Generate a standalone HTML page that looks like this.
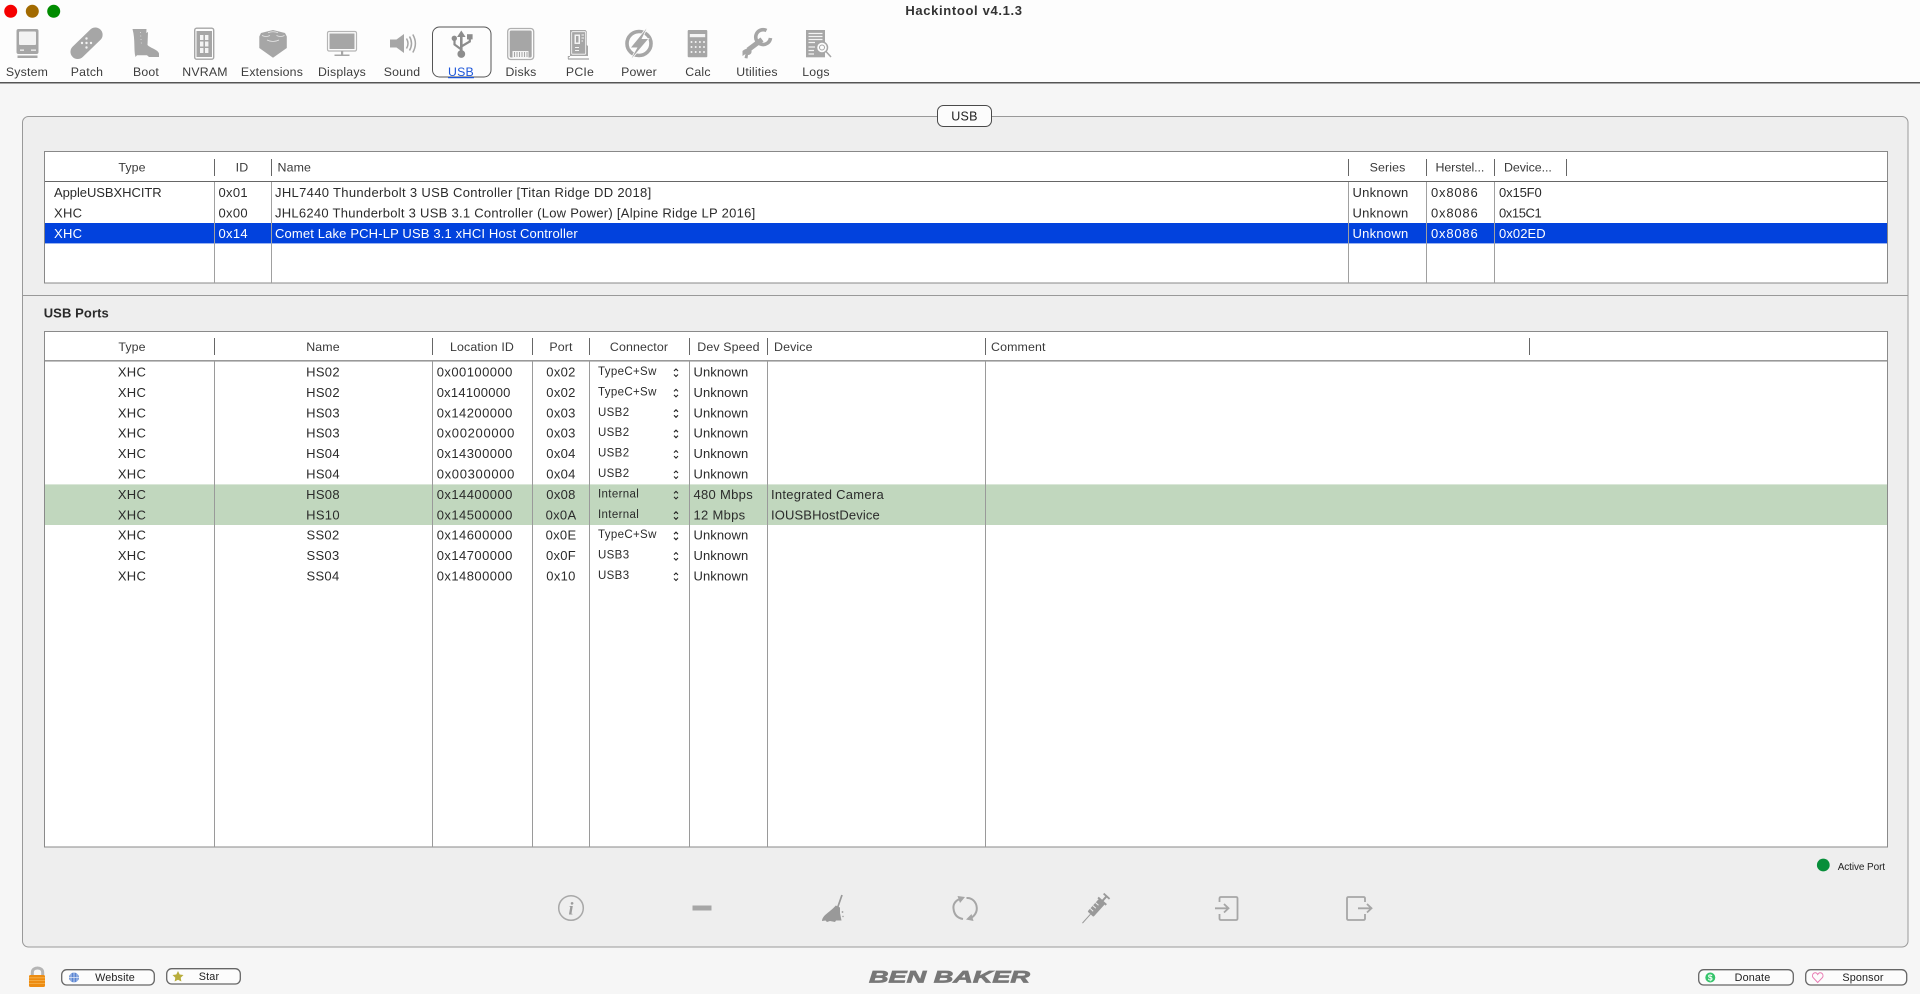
<!DOCTYPE html>
<html><head><meta charset="utf-8"><title>Hackintool</title>
<style>
html,body{margin:0;padding:0;background:#f6f6f6;width:1920px;height:994px;overflow:hidden}
svg{display:block;position:absolute;left:0;top:0;filter:blur(.3px)}
text{font-family:"Liberation Sans",sans-serif;font-size:13px;letter-spacing:.3px;fill:#2b2b2b}
.m{text-anchor:middle}
.h{font-size:12.4px;letter-spacing:.12px;fill:#3a3a3a}
.tb{font-size:12.3px;letter-spacing:.2px;text-anchor:middle;fill:#3c3c3c}
.c{font-size:11.5px;letter-spacing:.35px;fill:#2b2b2b}
.b{font-size:10.8px;letter-spacing:.15px;text-anchor:middle;fill:#222}
.w{fill:#fff}
.i{fill:#a6a6a6}
.s{fill:none;stroke:#a6a6a6}
.bi{fill:none;stroke:#a8a8a8}
</style></head>
<body>
<svg width="1920" height="994" viewBox="0 0 1920 994" xmlns="http://www.w3.org/2000/svg">
<rect x="0" y="0" width="1920" height="82" fill="#fdfdfd"/>
<rect x="0" y="82" width="1920" height="912" fill="#f6f6f6"/>
<rect x="0" y="82" width="1920" height="1.5" fill="#555"/>

<circle cx="10.7" cy="11.3" r="6.5" fill="#f50000"/>
<circle cx="32.3" cy="11.3" r="6.5" fill="#a26a00"/>
<circle cx="53.7" cy="11.3" r="6.5" fill="#008c00"/>
<text x="964" y="15" class="m" style="font-weight:bold;font-size:13px;letter-spacing:.65px;fill:#333">Hackintool v4.1.3</text>

<!-- selected toolbar box -->
<rect x="432.5" y="27" width="58.5" height="50" rx="7" fill="#fdfdfd" stroke="#555" stroke-width="1"/>

<!-- System -->
<rect x="16.5" y="29" width="22" height="25" rx="2" class="i"/>
<rect x="19" y="31.5" width="17" height="13.5" rx="1" fill="#f2f2f2"/>
<rect x="20" y="49.5" width="4" height="1.3" fill="#f2f2f2"/><rect x="31" y="49.5" width="5" height="1.3" fill="#f2f2f2"/>
<rect x="17.5" y="55.5" width="20" height="2.5" class="i"/>
<!-- Patch -->
<rect x="67" y="36" width="39" height="14.5" rx="7.2" class="i" transform="rotate(-44 86.5 43.2)"/>
<g fill="#f2f2f2"><circle cx="86.5" cy="38.5" r="1.2"/><circle cx="91" cy="43" r="1.2"/><circle cx="82" cy="43" r="1.2"/><circle cx="86.5" cy="47.5" r="1.2"/><circle cx="86.5" cy="43" r="1.2"/></g>
<!-- Boot -->
<path d="M132.5 29 H146.5 L146.3 33 L148 32 L147.5 45 C150 48 158 49.5 159 53.5 V57 H149 L147 55.3 H137 L135.5 57 C133.5 50 135.5 40 132.5 29Z" class="i"/>
<path d="M140.5 32 L141.5 46" fill="none" stroke="#e8e8e8" stroke-width=".7" stroke-dasharray="1 2.5"/>
<!-- NVRAM -->
<rect x="194.7" y="28.2" width="19" height="31" rx="2" fill="#fdfdfd" stroke="#a6a6a6" stroke-width="1.4"/>
<rect x="196.5" y="31" width="15.5" height="26" class="i"/>
<g fill="#f4f4f4"><rect x="200" y="35" width="3.4" height="5"/><rect x="205" y="35" width="3.4" height="5"/><rect x="200" y="41.5" width="3.4" height="5"/><rect x="205" y="41.5" width="3.4" height="5"/><rect x="200" y="48" width="3.4" height="5"/><rect x="205" y="48" width="3.4" height="5"/></g>
<!-- Extensions -->
<path d="M273 30 L285 33 L286.8 36.5 L286.8 48 L273 57.7 L259.3 48 L259.3 36.5 L261 33Z" class="i"/>
<g fill="none" stroke="#e8e8e8" stroke-width=".8"><path d="M262 35.5 Q266 37.5 270 35.5"/><path d="M276.5 35.5 Q280.5 37.5 284.5 35.5"/><path d="M267 40 Q273 43 279 40"/><path d="M268 32.7 Q273 30.8 278 32.7"/></g>
<!-- Displays -->
<rect x="327.5" y="31.5" width="29" height="19.5" rx="1.5" fill="#fdfdfd" stroke="#b5b5b5" stroke-width="1.2"/>
<rect x="329.5" y="33.5" width="25" height="15.5" class="i"/>
<rect x="341" y="51" width="2.2" height="4" class="i"/><rect x="334.5" y="54.5" width="15" height="1.5" class="i"/>
<!-- Sound -->
<path d="M390 39.5 H396.5 L404 34 V53 L396.5 47.5 H390Z" class="i"/>
<g class="s" stroke-width="1.5"><path d="M406.5 38.5 Q409.5 43.5 406.5 48.5"/><path d="M409.5 36.5 Q413.5 43.5 409.5 50.5"/><path d="M412.8 34.5 Q418 43.5 412.8 52.5"/></g>
<!-- USB -->
<g><path d="M461.3 35 V53" fill="none" stroke="#8d8d8d" stroke-width="2.6"/><path d="M461.3 30.5 L457 37 H465.6Z" fill="#8d8d8d"/><circle cx="461.3" cy="54" r="3.9" fill="#8d8d8d"/>
<path d="M461.3 49.5 L454.5 44.5 V39" fill="none" stroke="#8d8d8d" stroke-width="2.2"/><circle cx="454.3" cy="38.3" r="2.7" fill="#8d8d8d"/>
<path d="M461.3 46.5 L469.8 41.5 V37" fill="none" stroke="#8d8d8d" stroke-width="2.2"/><rect x="467" y="34.2" width="5.6" height="5.2" fill="#8d8d8d"/></g>
<!-- Disks -->
<rect x="507.7" y="28.5" width="26" height="31" rx="3" fill="#fdfdfd" stroke="#b0b0b0" stroke-width="1.3"/>
<rect x="509.7" y="30.5" width="22" height="27" rx="1.5" class="i"/>
<rect x="512.5" y="51" width="16" height="6.5" fill="#f4f4f4"/>
<path d="M514.5 52 V57 M517 52 V57 M519.5 52 V57 M522 52 V57 M524.5 52 V57 M527 52 V57" stroke="#a6a6a6" stroke-width="1"/>
<!-- PCIe -->
<path d="M570 30 H585.5 L586.8 31.5 V45 L588 46 V56 H570Z" class="i"/><path d="M568 59 H589" stroke="#a6a6a6" stroke-width="1.2"/><path d="M568.3 59 V56.5 H570" fill="none" stroke="#a6a6a6"/>
<rect x="571.7" y="31.7" width="14" height="22.5" rx="1" fill="none" stroke="#fdfdfd" stroke-width=".8"/>
<rect x="574.5" y="34.5" width="5.5" height="9.5" fill="#f4f4f4"/><rect x="576" y="36" width="2.5" height="6.5" class="i"/>
<path d="M581.5 35 H584 M581.5 38 H584 M581.5 41 H583" stroke="#f4f4f4" stroke-width="1"/><path d="M575 47.5 H579 M575 50.5 H579" stroke="#f4f4f4" stroke-width="1"/>
<!-- Power -->
<circle cx="639" cy="43.5" r="12" fill="none" stroke="#a6a6a6" stroke-width="3.6"/>
<path d="M646.5 28.5 L631 47.5 H637.5 L631.5 58.5 L648 39 H641.5Z" class="i" stroke="#fdfdfd" stroke-width="1.6" paint-order="stroke"/>
<!-- Calc -->
<rect x="687.7" y="30" width="19.6" height="27.3" rx="1" class="i"/>
<rect x="689.8" y="34" width="15.4" height="3.2" fill="#f4f4f4"/>
<g fill="#f4f4f4"><circle cx="691.5" cy="42" r="1"/><circle cx="695.7" cy="42" r="1"/><circle cx="699.9" cy="42" r="1"/><circle cx="704" cy="42" r="1"/><circle cx="691.5" cy="47" r="1"/><circle cx="695.7" cy="47" r="1"/><circle cx="699.9" cy="47" r="1"/><circle cx="704" cy="47" r="1"/><circle cx="691.5" cy="52" r="1"/><circle cx="695.7" cy="52" r="1"/><circle cx="699.9" cy="52" r="1"/><circle cx="704" cy="52" r="1"/></g>
<!-- Utilities -->
<path d="M762 39.5 L748 50" fill="none" stroke="#a6a6a6" stroke-width="5"/>
<path d="M766.5 30.5 A7.4 7.4 0 1 0 770.5 38" fill="none" stroke="#a6a6a6" stroke-width="3.6"/>
<path d="M742.5 51 C745 48.5 749 48 751 49.5 C752.5 52 751 55 748 55 L747.5 58.5 L744.5 58 L745.5 54 L742.5 56Z" class="i"/>
<!-- Logs -->
<rect x="806" y="30" width="19" height="27.3" class="i"/>
<path d="M808.5 33.5 H822.5 M808.5 36.5 H822.5 M808.5 39.5 H822.5 M808.5 42.5 H815 M808.5 47 H815 M808.5 50.5 H814 M808.5 54 H814" stroke="#f4f4f4" stroke-width="1.2"/>
<circle cx="822" cy="47.5" r="5.5" fill="#fdfdfd" stroke="#a6a6a6" stroke-width="1.5"/><circle cx="822" cy="47.5" r="2.5" fill="none" stroke="#a6a6a6"/>
<path d="M826 51.5 L831 57" stroke="#a6a6a6" stroke-width="1.5"/>

<!-- Toolbar labels -->
<text class="tb" x="27" y="76">System</text>
<text class="tb" x="87" y="76">Patch</text>
<text class="tb" x="146" y="76">Boot</text>
<text class="tb" x="205" y="76">NVRAM</text>
<text class="tb" x="272" y="76">Extensions</text>
<text class="tb" x="342" y="76">Displays</text>
<text class="tb" x="402" y="76">Sound</text>
<text class="tb" x="461" y="76" style="fill:#1b55d9;text-decoration:underline">USB</text>
<text class="tb" x="521" y="76">Disks</text>
<text class="tb" x="580" y="76">PCIe</text>
<text class="tb" x="639" y="76">Power</text>
<text class="tb" x="698" y="76">Calc</text>
<text class="tb" x="757" y="76">Utilities</text>
<text class="tb" x="816" y="76">Logs</text>

<!-- Panel -->
<rect x="22.5" y="116.5" width="1885.5" height="830.5" rx="6" fill="#eeeeee" stroke="#999" stroke-width="1"/>
<rect x="937.5" y="105.5" width="54" height="21" rx="6" fill="#fcfcfc" stroke="#4a4a4a" stroke-width="1"/>
<text x="964.5" y="120.5" class="m" style="font-size:12.5px;fill:#222">USB</text>
<rect x="22" y="295" width="1886" height="1" fill="#999"/>
<text x="43.7" y="317.5" style="font-weight:bold;font-size:13px;letter-spacing:.1px;fill:#2a2a2a">USB Ports</text>

<!-- Upper table -->
<rect x="44.5" y="151.5" width="1843" height="131.5" fill="#fff" stroke="#888" stroke-width="1"/>
<rect x="45" y="223" width="1842" height="20.4" fill="#0242dd"/>
<rect x="45" y="181" width="1842" height="1" fill="#666"/>
<path d="M214.5 182 V283 M271.5 182 V283 M1348.5 182 V283 M1426.5 182 V283 M1494.5 182 V283" stroke="#a0a0a0" stroke-width="1"/>
<path d="M214.5 159 V176 M271.5 159 V176 M1348.5 159 V176 M1426.5 159 V176 M1494.5 159 V176 M1566.5 159 V176" stroke="#666" stroke-width="1"/>
<text class="h m" x="132" y="171.5">Type</text>
<text class="h m" x="242" y="171.5">ID</text>
<text class="h" x="277.5" y="171.5">Name</text>
<text class="h m" x="1387.5" y="171.5">Series</text>
<text class="h" x="1435.5" y="171.5" textLength="49">Herstel...</text>
<text class="h" x="1504" y="171.5" textLength="48">Device...</text>

<g transform="translate(0 -.4)">
<text x="54" y="197.4" textLength="108">AppleUSBXHCITR</text><text x="218.5" y="197.4">0x01</text><text x="275" y="197.4" textLength="376.5">JHL7440 Thunderbolt 3 USB Controller [Titan Ridge DD 2018]</text><text x="1352.5" y="197.4" textLength="56">Unknown</text><text x="1431" y="197.4" textLength="47">0x8086</text><text x="1499" y="197.4" textLength="43">0x15F0</text>
<text x="54" y="217.8">XHC</text><text x="218.5" y="217.8">0x00</text><text x="275" y="217.8" textLength="480.5">JHL6240 Thunderbolt 3 USB 3.1 Controller (Low Power) [Alpine Ridge LP 2016]</text><text x="1352.5" y="217.8" textLength="56">Unknown</text><text x="1431" y="217.8" textLength="47">0x8086</text><text x="1499" y="217.8" textLength="43">0x15C1</text>
<text class="w" x="54" y="238.2">XHC</text><text class="w" x="218.5" y="238.2">0x14</text><text class="w" x="275" y="238.2" textLength="303">Comet Lake PCH-LP USB 3.1 xHCI Host Controller</text><text class="w" x="1352.5" y="238.2" textLength="56">Unknown</text><text class="w" x="1431" y="238.2" textLength="47">0x8086</text><text class="w" x="1499" y="238.2" textLength="47">0x02ED</text>
</g>

<!-- Lower table -->
<rect x="44.5" y="331.5" width="1843" height="515.5" fill="#fff" stroke="#8a8a8a" stroke-width="1"/>
<rect x="45" y="484.4" width="1842" height="40.6" fill="#c1d7be"/>
<rect x="45" y="360" width="1842" height="1.6" fill="#999"/>
<path d="M214.5 361 V847 M432.5 361 V847 M532.5 361 V847 M589.5 361 V847 M689.5 361 V847 M767.5 361 V847 M985.5 361 V847" stroke="#9a9a9a" stroke-width="1"/>
<path d="M214.5 338 V355 M432.5 338 V355 M532.5 338 V355 M589.5 338 V355 M689.5 338 V355 M767.5 338 V355 M985.5 338 V355 M1529.5 338 V355" stroke="#666" stroke-width="1"/>
<text class="h m" x="132" y="351">Type</text>
<text class="h m" x="323" y="351">Name</text>
<text class="h m" x="482" y="351">Location ID</text>
<text class="h m" x="561" y="351">Port</text>
<text class="h m" x="639" y="351">Connector</text>
<text class="h m" x="728.5" y="351">Dev Speed</text>
<text class="h" x="774" y="351">Device</text>
<text class="h" x="991" y="351">Comment</text>

<g id="rows" transform="translate(0 -.5)">
<text class="m" x="132" y="377">XHC</text><text class="m" x="323" y="377">HS02</text><text x="436.7" y="377" textLength="76">0x00100000</text><text class="m" x="561" y="377">0x02</text><text class="c" x="598" y="375.5">TypeC+Sw</text><text x="693.5" y="377" textLength="55">Unknown</text>
<text class="m" x="132" y="397.4">XHC</text><text class="m" x="323" y="397.4">HS02</text><text x="436.7" y="397.4" textLength="74">0x14100000</text><text class="m" x="561" y="397.4">0x02</text><text class="c" x="598" y="395.9">TypeC+Sw</text><text x="693.5" y="397.4" textLength="55">Unknown</text>
<text class="m" x="132" y="417.8">XHC</text><text class="m" x="323" y="417.8">HS03</text><text x="436.7" y="417.8" textLength="76">0x14200000</text><text class="m" x="561" y="417.8">0x03</text><text class="c" x="598" y="416.3">USB2</text><text x="693.5" y="417.8" textLength="55">Unknown</text>
<text class="m" x="132" y="438.2">XHC</text><text class="m" x="323" y="438.2">HS03</text><text x="436.7" y="438.2" textLength="78">0x00200000</text><text class="m" x="561" y="438.2">0x03</text><text class="c" x="598" y="436.7">USB2</text><text x="693.5" y="438.2" textLength="55">Unknown</text>
<text class="m" x="132" y="458.6">XHC</text><text class="m" x="323" y="458.6">HS04</text><text x="436.7" y="458.6" textLength="76">0x14300000</text><text class="m" x="561" y="458.6">0x04</text><text class="c" x="598" y="457.1">USB2</text><text x="693.5" y="458.6" textLength="55">Unknown</text>
<text class="m" x="132" y="479">XHC</text><text class="m" x="323" y="479">HS04</text><text x="436.7" y="479" textLength="78">0x00300000</text><text class="m" x="561" y="479">0x04</text><text class="c" x="598" y="477.5">USB2</text><text x="693.5" y="479" textLength="55">Unknown</text>
<text class="m" x="132" y="499.4">XHC</text><text class="m" x="323" y="499.4">HS08</text><text x="436.7" y="499.4" textLength="76">0x14400000</text><text class="m" x="561" y="499.4">0x08</text><text class="c" x="598" y="497.9">Internal</text><text x="693.5" y="499.4">480 Mbps</text><text x="771" y="499.4" textLength="113">Integrated Camera</text>
<text class="m" x="132" y="519.8">XHC</text><text class="m" x="323" y="519.8">HS10</text><text x="436.7" y="519.8" textLength="76">0x14500000</text><text class="m" x="561" y="519.8">0x0A</text><text class="c" x="598" y="518.3">Internal</text><text x="693.5" y="519.8">12 Mbps</text><text x="771" y="519.8" textLength="109">IOUSBHostDevice</text>
<text class="m" x="132" y="540.2">XHC</text><text class="m" x="323" y="540.2">SS02</text><text x="436.7" y="540.2" textLength="76">0x14600000</text><text class="m" x="561" y="540.2">0x0E</text><text class="c" x="598" y="538.7">TypeC+Sw</text><text x="693.5" y="540.2" textLength="55">Unknown</text>
<text class="m" x="132" y="560.6">XHC</text><text class="m" x="323" y="560.6">SS03</text><text x="436.7" y="560.6" textLength="76">0x14700000</text><text class="m" x="561" y="560.6">0x0F</text><text class="c" x="598" y="559.1">USB3</text><text x="693.5" y="560.6" textLength="55">Unknown</text>
<text class="m" x="132" y="581">XHC</text><text class="m" x="323" y="581">SS04</text><text x="436.7" y="581" textLength="76">0x14800000</text><text class="m" x="561" y="581">0x10</text><text class="c" x="598" y="579.5">USB3</text><text x="693.5" y="581" textLength="55">Unknown</text>
</g>
<!-- steppers -->
<g fill="none" stroke="#222" stroke-width="1.1">
<path d="M674 371 L676 369 L678 371 M674 374.5 L676 376.5 L678 374.5"/>
<path d="M674 391.4 L676 389.4 L678 391.4 M674 394.9 L676 396.9 L678 394.9"/>
<path d="M674 411.8 L676 409.8 L678 411.8 M674 415.3 L676 417.3 L678 415.3"/>
<path d="M674 432.2 L676 430.2 L678 432.2 M674 435.7 L676 437.7 L678 435.7"/>
<path d="M674 452.6 L676 450.6 L678 452.6 M674 456.1 L676 458.1 L678 456.1"/>
<path d="M674 473 L676 471 L678 473 M674 476.5 L676 478.5 L678 476.5"/>
<path d="M674 493.4 L676 491.4 L678 493.4 M674 496.9 L676 498.9 L678 496.9"/>
<path d="M674 513.8 L676 511.8 L678 513.8 M674 517.3 L676 519.3 L678 517.3"/>
<path d="M674 534.2 L676 532.2 L678 534.2 M674 537.7 L676 539.7 L678 537.7"/>
<path d="M674 554.6 L676 552.6 L678 554.6 M674 558.1 L676 560.1 L678 558.1"/>
<path d="M674 575 L676 573 L678 575 M674 578.5 L676 580.5 L678 578.5"/>
</g>

<!-- Active port -->
<circle cx="1823.3" cy="865" r="6.4" fill="#078e3a"/>
<text x="1837.7" y="870" textLength="47.5" style="font-size:10px;letter-spacing:.1px;fill:#222">Active Port</text>

<!-- Bottom action icons -->
<circle cx="571" cy="908" r="12.3" class="bi" stroke-width="1.5"/>
<text x="571" y="914.5" class="m" style="font-family:'Liberation Serif',serif;font-style:italic;font-weight:bold;font-size:18px;letter-spacing:0;fill:#9c9c9c">i</text>
<rect x="692.5" y="905.5" width="19" height="5" fill="#a6a6a6"/>
<!-- broom -->
<path d="M842 895 L837.8 907" stroke="#999" stroke-width="1.7" fill="none"/>
<path d="M835.8 905.5 L840 907.5 L840 913 L841.5 920.5 L836 920.5 L835 922 L830 921 L827 922 L825.5 920.5 L822 921 C822.5 915 829 913 835.8 905.5Z" fill="#999"/>
<circle cx="842.5" cy="912" r=".9" fill="#999"/><circle cx="843" cy="916.5" r=".7" fill="#999"/>
<!-- sync -->
<g fill="none" stroke="#a6a6a6" stroke-width="2"><path d="M963 898.5 C955 899 953 905 953.5 908.5 C954 914 957 918 963 919"/><path d="M966.5 898 C972 897.5 976.5 902 976.8 908 C977 914 972 918.5 968 918.7"/></g>
<path d="M957.5 896 L965 897 L960 903Z M973.5 921 L966 919.5 L971.5 914Z" fill="#a6a6a6"/>
<!-- syringe -->
<g transform="translate(1096.5 907.5) rotate(42)"><rect x="-4" y="-8" width="8" height="17" rx="1" fill="#999"/><rect x="-5.5" y="-9.5" width="11" height="2" fill="#999"/><rect x="-1" y="-15" width="2" height="6" fill="#999"/><rect x="-4" y="-16" width="8" height="1.8" fill="#999"/><path d="M0 9 V21" stroke="#999" stroke-width="1"/><path d="M-4 -3 H0 M-4 1 H0 M-4 5 H0" stroke="#eee" stroke-width="1"/></g>
<!-- import -->
<path d="M1219.5 902 V898.5 Q1219.5 897 1221 897 H1236 Q1237.5 897 1237.5 898.5 V918.5 Q1237.5 920 1236 920 H1221 Q1219.5 920 1219.5 918.5 V914" fill="none" stroke="#a6a6a6" stroke-width="1.8"/>
<path d="M1215 908.3 H1228 M1224 904 L1228.5 908.3 L1224 912.5" fill="none" stroke="#a6a6a6" stroke-width="1.8"/>
<!-- export -->
<path d="M1365 902 V898.5 Q1365 897 1363.5 897 H1348.5 Q1347 897 1347 898.5 V918.5 Q1347 920 1348.5 920 H1363.5 Q1365 920 1365 918.5 V914" fill="none" stroke="#a6a6a6" stroke-width="1.8"/>
<path d="M1358 908.3 H1371 M1367 904 L1371.5 908.3 L1367 912.5" fill="none" stroke="#a6a6a6" stroke-width="1.8"/>

<!-- Lock -->
<path d="M32.3 976 V972.5 C32.3 966.5 42.7 966.5 42.7 972.5 V976" fill="none" stroke="#b5b5b5" stroke-width="3"/>
<rect x="29" y="975" width="16" height="12" rx="1.5" fill="#ed8c12"/>
<path d="M29 977.8 H45 M29 980.6 H45 M29 983.4 H45" stroke="#f7b451" stroke-width=".8"/>

<!-- Bottom buttons -->
<rect x="61.7" y="969.7" width="92.6" height="15.3" rx="5" fill="#fcfcfc" stroke="#666" stroke-width="1.3"/>
<circle cx="74" cy="977.5" r="5" fill="#5a85d2"/><path d="M69 977.5 H79 M74 972.5 V982.5 M71 973.5 Q71 977.5 71 981.5 M77 973.5 Q77 977.5 77 981.5" stroke="#e6ecf8" stroke-width=".7" fill="none"/>
<text class="b" x="115" y="981">Website</text>
<rect x="166.7" y="968.7" width="73.6" height="15.3" rx="5" fill="#fcfcfc" stroke="#666" stroke-width="1.3"/>
<path d="M178 971 L179.7 974.5 L183.5 975 L180.7 977.7 L181.4 981.5 L178 979.7 L174.6 981.5 L175.3 977.7 L172.5 975 L176.3 974.5Z" fill="#b8ad3c"/>
<text class="b" x="209" y="980">Star</text>
<rect x="1698.7" y="969.7" width="94.6" height="15.3" rx="5" fill="#fcfcfc" stroke="#666" stroke-width="1.3"/>
<circle cx="1710.3" cy="977.5" r="5" fill="#37c56c"/>
<text x="1710.3" y="980.5" class="m" style="font-size:8.5px;font-weight:bold;letter-spacing:0;fill:#fff">$</text>
<text class="b" x="1752.5" y="981">Donate</text>
<rect x="1805.7" y="969.7" width="101" height="15.3" rx="5" fill="#fcfcfc" stroke="#666" stroke-width="1.3"/>
<path d="M1817.7 982.5 L1813 977.5 C1811 974 1815.5 970.5 1817.7 974.5 C1820 970.5 1824.5 974 1822.5 977.5Z" fill="none" stroke="#e87db4" stroke-width="1"/>
<text class="b" x="1863" y="981">Sponsor</text>

<!-- Logo -->
<text x="869" y="982.7" textLength="161" lengthAdjust="spacingAndGlyphs" style="font-weight:bold;font-style:italic;font-size:16.5px;letter-spacing:0;fill:#777;stroke:#777;stroke-width:.7px">BEN BAKER</text>
</svg>
</body></html>
